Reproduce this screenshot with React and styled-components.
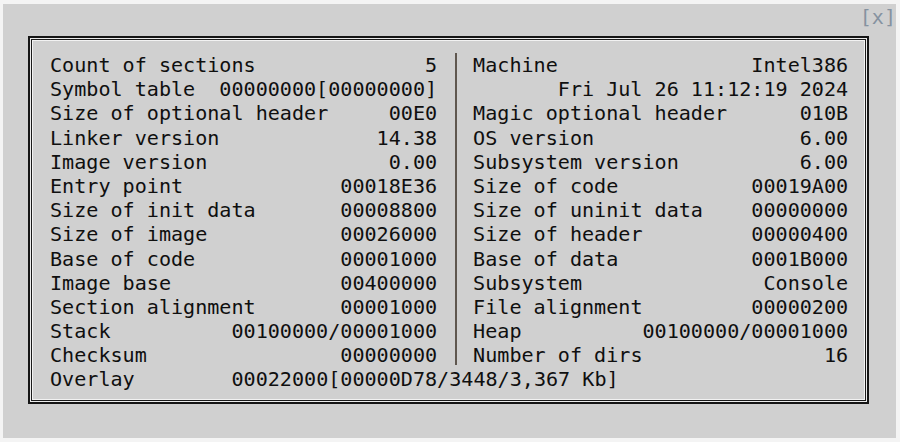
import React from 'react';
import styled, { createGlobalStyle } from 'styled-components';

const GlobalStyle = createGlobalStyle`
  html, body {
    margin: 0;
    padding: 0;
    background: #f4f4f4;
  }
`;

const Page = styled.div`
  width: 900px;
  height: 442px;
  box-sizing: border-box;
  padding: 4px 4px 4px 3px;
  font-family: "DejaVu Sans Mono", "Liberation Mono", monospace;
  font-size: 20.1px;
  color: #0f0f0f;
`;

const Panel = styled.div`
  height: 100%;
  background: #d0d0d0;
  display: flex;
  flex-direction: column;
`;

const TitleBar = styled.div`
  height: 32px;
  box-sizing: border-box;
  padding-top: 1px;
  display: flex;
  justify-content: flex-end;
`;

const CloseButton = styled.span`
  line-height: 24px;
  color: #8592a0;
  cursor: pointer;
`;

const Frame = styled.div`
  width: 841px;
  height: 368px;
  margin-left: 25px;
  box-sizing: border-box;
  border: 2px solid #151515;
  box-shadow: inset 0 0 0 1px #ececec, inset 0 0 0 2px #1b1b1b, inset 0 0 0 3px #f2f2f2;
  padding: 15px 0 0 20px;
  line-height: 24.2px;
  white-space: pre;
`;

const Columns = styled.div`
  display: flex;
`;

const Column = styled.div`
  width: ${({ $chars }) => $chars}ch;
  display: flex;
  flex-direction: column;
`;

const Divider = styled.div`
  width: 2px;
  margin: 0 16px 2px 18px;
  background: #5f574f;
`;

const Row = styled.div`
  display: flex;
  justify-content: space-between;
  height: 24.2px;
`;

const Label = styled.span`
  display: inline-block;
  width: ${({ $chars }) => ($chars ? `${$chars}ch` : 'auto')};
`;

const Value = styled.span``;

const leftRows = [
  ['Count of sections', '5'],
  ['Symbol table', '00000000[00000000]'],
  ['Size of optional header', '00E0'],
  ['Linker version', '14.38'],
  ['Image version', '0.00'],
  ['Entry point', '00018E36'],
  ['Size of init data', '00008800'],
  ['Size of image', '00026000'],
  ['Base of code', '00001000'],
  ['Image base', '00400000'],
  ['Section alignment', '00001000'],
  ['Stack', '00100000/00001000'],
  ['Checksum', '00000000'],
];

const rightRows = [
  ['Machine', 'Intel386'],
  ['', 'Fri Jul 26 11:12:19 2024'],
  ['Magic optional header', '010B'],
  ['OS version', '6.00'],
  ['Subsystem version', '6.00'],
  ['Size of code', '00019A00'],
  ['Size of uninit data', '00000000'],
  ['Size of header', '00000400'],
  ['Base of data', '0001B000'],
  ['Subsystem', 'Console'],
  ['File alignment', '00000200'],
  ['Heap', '00100000/00001000'],
  ['Number of dirs', '16'],
];

const InfoColumn = ({ rows, chars }) => (
  <Column $chars={chars}>
    {rows.map(([label, value], i) => (
      <Row key={i}>
        <Label>{label}</Label>
        <Value>{value}</Value>
      </Row>
    ))}
  </Column>
);

const App = () => (
  <>
    <GlobalStyle />
    <Page>
      <Panel>
        <TitleBar>
          <CloseButton>[x]</CloseButton>
        </TitleBar>
        <Frame>
          <Columns>
            <InfoColumn rows={leftRows} chars={32} />
            <Divider />
            <InfoColumn rows={rightRows} chars={31} />
          </Columns>
          <Row>
            <span>
              <Label $chars={15}>Overlay</Label>
              <Value>00022000[00000D78/3448/3,367 Kb]</Value>
            </span>
          </Row>
        </Frame>
      </Panel>
    </Page>
  </>
);

export default App;
